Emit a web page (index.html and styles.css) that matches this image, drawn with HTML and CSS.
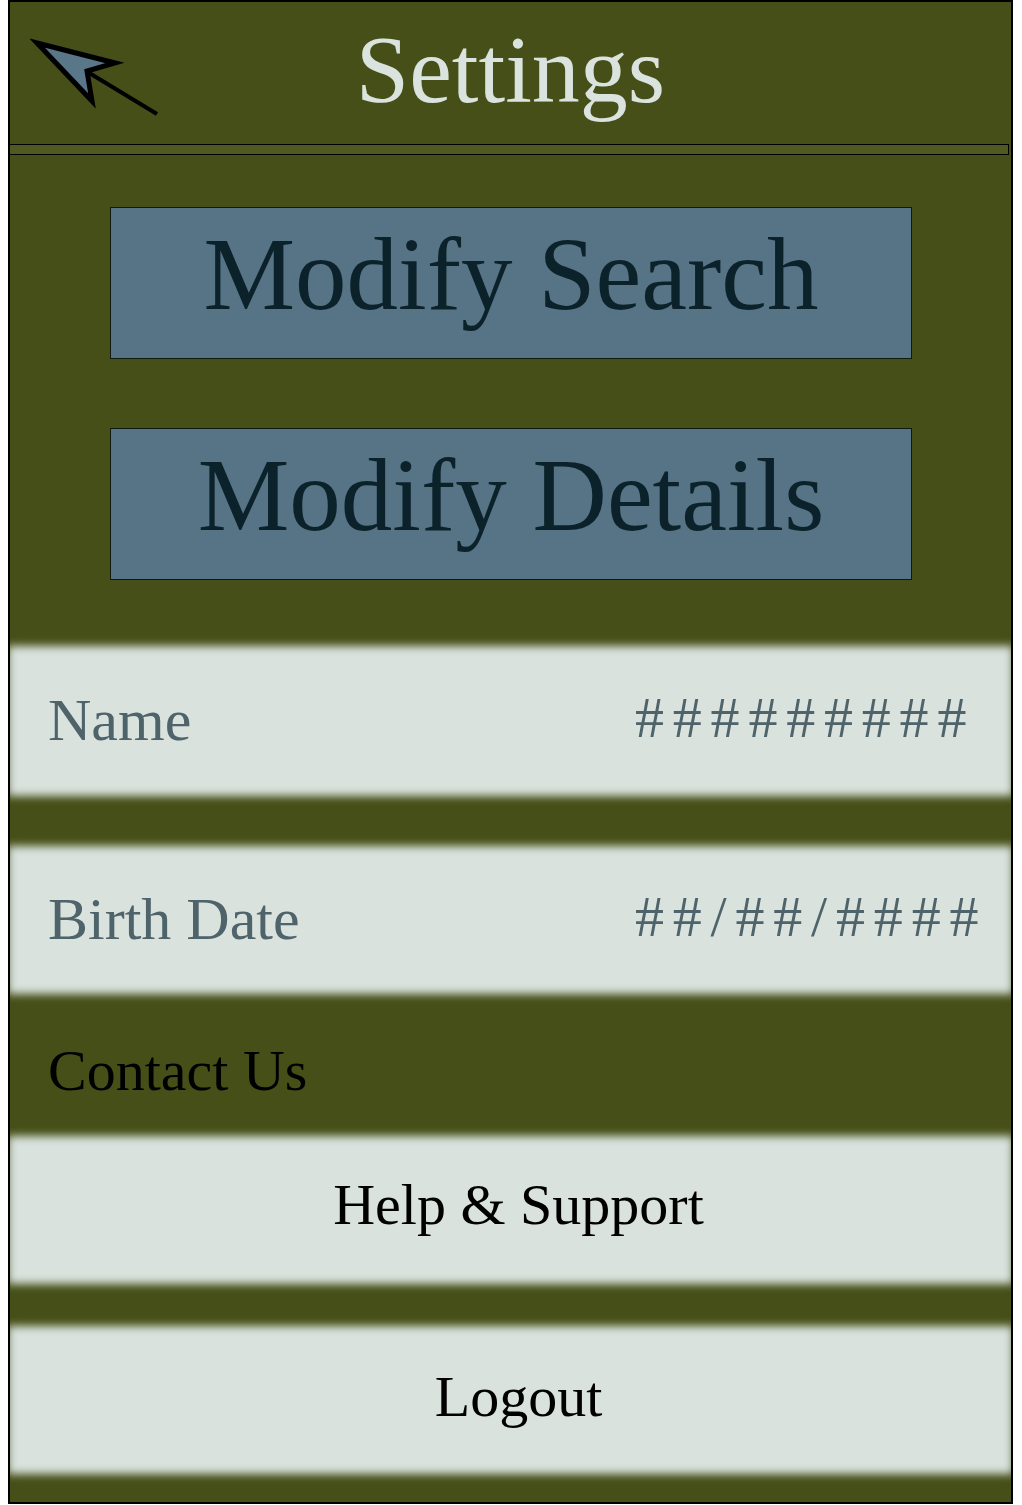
FILE: index.html
```html
<!DOCTYPE html>
<html lang="en">
<head>
<meta charset="utf-8">
<title>Settings</title>
<link rel="stylesheet" href="styles.css">
</head>
<body>
<div class="screen">
  <header class="header">
    <svg class="back" width="130" height="80" viewBox="0 0 130 80" aria-label="Back">
      <line x1="56" y1="34" x2="127" y2="77" stroke="#000" stroke-width="4"/>
      <polygon points="7,6 85,26 57,34 62,64" fill="#5a7689" stroke="#000" stroke-width="5" stroke-linejoin="miter"/>
    </svg>
    <h1 class="title">Settings</h1>
    <span></span>
  </header>
  <div class="divider"></div>
  <div class="actions">
    <button class="action">Modify Search</button>
    <button class="action">Modify Details</button>
  </div>
  <div class="panel field first">
    <span class="label">Name</span>
    <span class="value">#########</span>
  </div>
  <div class="panel field second">
    <span class="label">Birth Date</span>
    <span class="value">##/##/####</span>
  </div>
  <div class="section-label">Contact Us</div>
  <div class="panel link help"><span>Help &amp; Support</span></div>
  <div class="panel link logout"><span>Logout</span></div>
</div>
</body>
</html>
```

FILE: styles.css
```css
* { box-sizing: border-box; }
html, body { margin: 0; padding: 0; background: #ffffff; }
body { padding-left: 8px; font-family: "Liberation Serif", "Times New Roman", serif; }

.screen {
  width: 1005px;
  height: 1504px;
  border: 2px solid #000;
  background: #464f17;
  overflow: hidden;
}

.header {
  height: 142px;
  display: grid;
  grid-template-columns: 1fr auto 1fr;
  align-items: center;
}
.back { align-self: start; margin-top: 35px; margin-left: 20px; display: block; }
.title {
  margin: 0;
  font-weight: normal;
  font-size: 96px;
  line-height: 1;
  color: #dae3de;
  padding-bottom: 6px;
}

.divider {
  height: 11px;
  margin-left: -2px;
  width: 1001px;
  border: 1px solid #000;
  background: #505a20;
}

.actions {
  display: flex;
  flex-direction: column;
  align-items: center;
  gap: 69px;
  padding-top: 52px;
}
.action {
  width: 802px;
  height: 152px;
  margin-left: 1px;
  background: #577386;
  border: 1px solid #0f1a10;
  color: #0c222b;
  font-family: "Liberation Serif", "Times New Roman", serif;
  font-size: 103px;
  line-height: 1;
  padding: 0 0 18px 0;
  display: flex;
  align-items: center;
  justify-content: center;
}

.panel {
  position: relative;
  margin: 0 -2px;
  height: 150px;
}
.panel::before {
  content: "";
  position: absolute;
  inset: 0;
  background: #d9e2dd;
  filter: blur(4px);
}
.panel > * { position: relative; }

.field {
  display: grid;
  grid-template-columns: 587px 1fr;
  align-items: center;
  padding-left: 40px;
  color: #4f636a;
}
.field.first { margin-top: 66px; }
.field.second { margin-top: 50px; height: 148px; }
.label { font-size: 60px; line-height: 1; padding-bottom: 2px; }
.value { font-size: 58px; letter-spacing: 8.8px; line-height: 1; padding-bottom: 6px; }

.section-label {
  height: 142px;
  padding: 48px 0 0 38px;
  font-size: 58px;
  line-height: 1;
  color: #000;
}

.link {
  display: flex;
  align-items: center;
  justify-content: center;
  font-size: 58px;
  color: #000;
  height: 148px;
}
.link span { padding-bottom: 8px; margin-left: 16px; }
.help span { padding-bottom: 12px; }
.logout { margin-top: 42px; }
```
